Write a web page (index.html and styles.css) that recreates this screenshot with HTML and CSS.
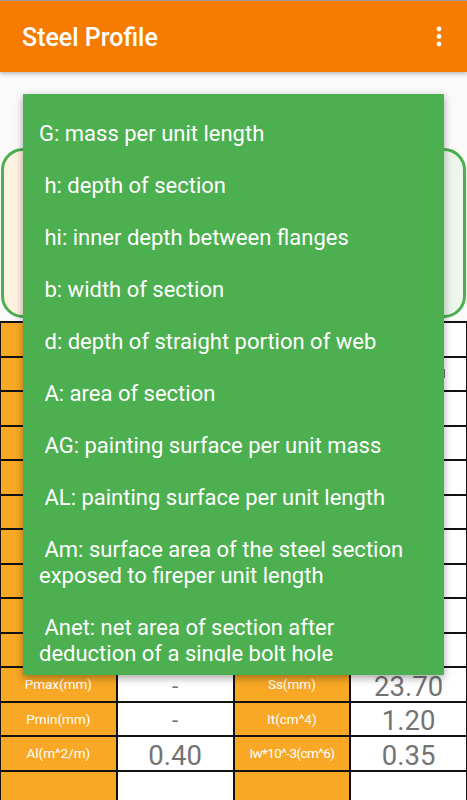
FILE: index.html
```html
<!DOCTYPE html>
<html lang="en-US">
  <head>
    <meta charset="utf-8" />
    <title>Steel Profile</title>
    <link rel="stylesheet" href="styles.css">
  </head>

  <body>
    <div class="statusLine"></div>

    <header class="appBar">
      <h1 class="appTitle">Steel Profile</h1>
      <svg class="overflow" width="8" height="24" viewBox="0 0 8 24">
        <circle cx="4" cy="5" r="2.4" fill="#fff" />
        <circle cx="4" cy="12.5" r="2.4" fill="#fff" />
        <circle cx="4" cy="20" r="2.4" fill="#fff" />
      </svg>
    </header>

    <div class="sectionRow">
      <div class="sectionBox drawBox"></div>
      <div class="sectionBox infoBox"></div>
    </div>

    <div class="propTable">
      <div class="label"></div><div class="value"></div>
      <div class="label"></div><div class="value"></div>

      <div class="label"></div><div class="value"></div>
      <div class="label"></div><div class="value"><span class="cursor"></span></div>

      <div class="label"></div><div class="value"></div>
      <div class="label"></div><div class="value"></div>

      <div class="label"></div><div class="value"></div>
      <div class="label"></div><div class="value"></div>

      <div class="label"></div><div class="value"></div>
      <div class="label"></div><div class="value"></div>

      <div class="label"></div><div class="value"></div>
      <div class="label"></div><div class="value"></div>

      <div class="label"></div><div class="value"></div>
      <div class="label"></div><div class="value"></div>

      <div class="label"></div><div class="value"></div>
      <div class="label"></div><div class="value"></div>

      <div class="label"></div><div class="value"></div>
      <div class="label"></div><div class="value"></div>

      <div class="label"></div><div class="value"></div>
      <div class="label"></div><div class="value"></div>

      <div class="label">Pmax(mm)</div><div class="value dash">-</div>
      <div class="label">Ss(mm)</div><div class="value">23.70</div>

      <div class="label">Pmin(mm)</div><div class="value dash">-</div>
      <div class="label">It(cm^4)</div><div class="value">1.20</div>

      <div class="label">Al(m^2/m)</div><div class="value">0.40</div>
      <div class="label narrow">Iw*10^-3(cm^6)</div><div class="value">0.35</div>

      <div class="label"></div><div class="value"></div>
      <div class="label"></div><div class="value"></div>
    </div>

    <div class="legendPopup">
      <div class="legendText">G: mass per unit length

 h: depth of section

 hi: inner depth between flanges

 b: width of section

 d: depth of straight portion of web

 A: area of section

 AG: painting surface per unit mass

 AL: painting surface per unit length

 Am: surface area of the steel section exposed to fireper unit length

 Anet: net area of section after deduction of a single bolt hole</div>
    </div>
  </body>
</html>
```

FILE: styles.css
```css
html {
  font-family: Roboto, "Noto Sans", sans-serif;
  background-color: #fafafa;
}

body {
  margin: 0;
  width: 467px;
  height: 800px;
  overflow: hidden;
  position: relative;
}

.statusLine {
  height: 1px;
  background-color: #9e9e9e;
}

.appBar {
  height: 71px;
  background-color: #f57c00;
  display: flex;
  align-items: center;
  justify-content: space-between;
  padding: 0 24px 0 22px;
  box-shadow: 0 2px 4px rgba(0, 0, 0, 0.25);
  position: relative;
}

.appTitle {
  margin: 2px 0 0 0;
  color: white;
  font-size: 25px;
  font-weight: 500;
}

.overflow {
  display: block;
  margin-top: -2px;
}

.sectionRow {
  display: flex;
  margin: 76px 1px 0 1px;
  height: 170px;
}

.sectionBox {
  flex: 1;
  border: 3px solid #4caf50;
  border-radius: 22px;
}

.drawBox {
  background-color: #fff3e0;
}

.infoBox {
  background-color: #edf6ec;
}

.propTable {
  margin-top: 3px;
  display: grid;
  grid-template-columns: repeat(4, 1fr);
  grid-auto-rows: 32.5px;
  gap: 2px;
  padding: 2px 1px 0 1px;
  background-color: #111;
}

.label {
  background-color: #f9a825;
  color: white;
  font-size: 13.5px;
  display: flex;
  align-items: center;
  justify-content: center;
}

.narrow {
  letter-spacing: -0.6px;
}

.value {
  background-color: white;
  color: #737373;
  font-size: 27.5px;
  display: flex;
  align-items: center;
  justify-content: center;
  padding-top: 4px;
  position: relative;
}

.dash {
  font-size: 22px;
}

.cursor {
  position: absolute;
  left: 92px;
  top: 11px;
  width: 2px;
  height: 9px;
  background-color: #757575;
}

.legendPopup {
  position: absolute;
  left: 23px;
  top: 94px;
  width: 421px;
  box-sizing: border-box;
  padding: 27px 26px 13px 16px;
  background-color: #4caf50;
  box-shadow: 0 3px 8px rgba(0, 0, 0, 0.35);
}

.legendText {
  height: 541px;
  overflow: hidden;
  color: white;
  font-size: 22px;
  line-height: 26px;
  white-space: pre-wrap;
}
```
